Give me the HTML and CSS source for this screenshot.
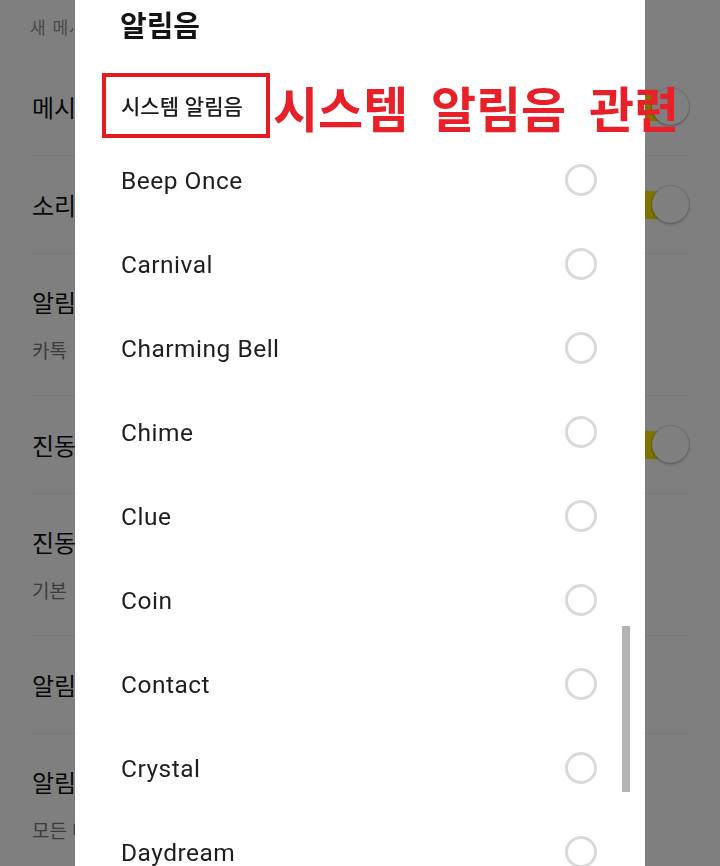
FILE: index.html
```html
<!DOCTYPE html>
<html lang="ko">
<head>
<meta charset="utf-8">
<title>알림음</title>
<link rel="stylesheet" href="styles.css">
</head>
<body>
<main class="settings">
  <div class="settings-head"><span class="clip">새 메시지 알림</span></div>
  <div class="row single">
    <span class="row-title clip">메시지 알림</span>
    <span class="toggle on"><span class="thumb"></span></span>
  </div>
  <div class="row single">
    <span class="row-title clip">소리</span>
    <span class="toggle on"><span class="thumb"></span></span>
  </div>
  <div class="row double">
    <span class="row-title clip">알림음</span>
    <span class="row-sub clip">카톡</span>
  </div>
  <div class="row single">
    <span class="row-title clip">진동</span>
    <span class="toggle on"><span class="thumb"></span></span>
  </div>
  <div class="row double">
    <span class="row-title clip">진동 패턴</span>
    <span class="row-sub clip">기본</span>
  </div>
  <div class="row single">
    <span class="row-title clip">알림 표시</span>
  </div>
  <div class="row double">
    <span class="row-title clip">알림 미리보기</span>
    <span class="row-sub clip">모든 메시지</span>
  </div>
</main>

<div class="dim"></div>

<section class="dialog">
  <h1 class="dialog-title">알림음</h1>
  <div class="section-row">
    <span class="section-label">시스템 알림음</span>
    <span class="annotation">시스템 알림음 관련</span>
  </div>
  <ul class="sound-list">
    <li class="sound"><span>Beep Once</span><span class="radio"></span></li>
    <li class="sound"><span>Carnival</span><span class="radio"></span></li>
    <li class="sound"><span>Charming Bell</span><span class="radio"></span></li>
    <li class="sound"><span>Chime</span><span class="radio"></span></li>
    <li class="sound"><span>Clue</span><span class="radio"></span></li>
    <li class="sound"><span>Coin</span><span class="radio"></span></li>
    <li class="sound"><span>Contact</span><span class="radio"></span></li>
    <li class="sound"><span>Crystal</span><span class="radio"></span></li>
    <li class="sound"><span>Daydream</span><span class="radio"></span></li>
  </ul>
  <div class="scrollbar"></div>
</section>
</body>
</html>
```

FILE: styles.css
```css
html, body {
  margin: 0;
  padding: 0;
  height: 866px;
  overflow: hidden;
  background: #ffffff;
  font-family: Roboto, "Noto Sans CJK KR", sans-serif;
}

/* background settings page */
.settings {
  display: flex;
  flex-direction: column;
  font-family: "Noto Sans CJK KR", sans-serif;
}
.clip {
  display: block;
  width: 43px;
  overflow: hidden;
  white-space: nowrap;
}
.settings-head {
  height: 58px;
  padding-left: 30px;
  line-height: 54px;
  font-size: 17px;
  letter-spacing: 1px;
  color: #939393;
}
.row {
  margin: 0 32px;
  border-bottom: 1px solid #eeeeee;
  display: flex;
  box-sizing: border-box;
}
.row.single {
  height: 98px;
  align-items: center;
  justify-content: space-between;
}
.row.double {
  height: 142px;
  flex-direction: column;
  padding-top: 33px;
}
.row-title {
  font-size: 24px;
  line-height: 30px;
  color: #111111;
}
.row-sub {
  margin-top: 18px;
  font-size: 19px;
  line-height: 30px;
  color: #7a7a7a;
}
.toggle {
  position: relative;
  width: 58px;
  height: 28px;
  border-radius: 14px;
  background: #fee500;
}
.thumb {
  position: absolute;
  right: -1px;
  top: -5px;
  width: 37px;
  height: 37px;
  border-radius: 50%;
  background: #ffffff;
  box-shadow: 0 0 0 1px rgba(0,0,0,0.12), 0 2px 3px rgba(0,0,0,0.18);
}

.dim {
  position: fixed;
  inset: 0;
  background: rgba(0, 0, 0, 0.5);
}

/* dialog */
.dialog {
  position: fixed;
  left: 75px;
  top: 0;
  bottom: 0;
  width: 570px;
  background: #ffffff;
  display: flex;
  flex-direction: column;
}
.dialog-title {
  margin: 0;
  height: 46px;
  padding-left: 45px;
  line-height: 48px;
  font-family: "Noto Sans CJK KR", sans-serif;
  font-size: 29px;
  font-weight: 700;
  color: #151515;
}
.section-row {
  height: 92px;
  box-sizing: border-box;
  padding-top: 26px;
  padding-left: 27px;
  display: flex;
  align-items: center;
  gap: 3px;
  white-space: nowrap;
}
.section-label {
  flex-shrink: 0;
  box-sizing: border-box;
  height: 65px;
  width: 168px;
  border: 4px solid #e31b23;
  padding-left: 15px;
  display: flex;
  align-items: center;
  font-family: "Noto Sans CJK KR", sans-serif;
  font-size: 21px;
  font-weight: 500;
  color: #1c1c1c;
}
.annotation {
  flex-shrink: 0;
  font-family: "Noto Sans CJK KR", sans-serif;
  font-size: 49px;
  font-weight: 700;
  letter-spacing: 0;
  word-spacing: 9px;
  color: #e8202a;
  margin-top: 2px;
}
.sound-list {
  list-style: none;
  margin: 0;
  padding: 0;
}
.sound {
  height: 84px;
  padding-left: 46px;
  padding-right: 48px;
  display: flex;
  align-items: center;
  justify-content: space-between;
  font-size: 24.5px;
  letter-spacing: 0.5px;
  color: #1e1e1e;
}
.radio {
  box-sizing: border-box;
  width: 32px;
  height: 32px;
  border-radius: 50%;
  border: 3px solid #d9d9d9;
}
.scrollbar {
  position: absolute;
  left: 547px;
  top: 626px;
  width: 8px;
  height: 166px;
  background: #b3b3b3;
}
```
